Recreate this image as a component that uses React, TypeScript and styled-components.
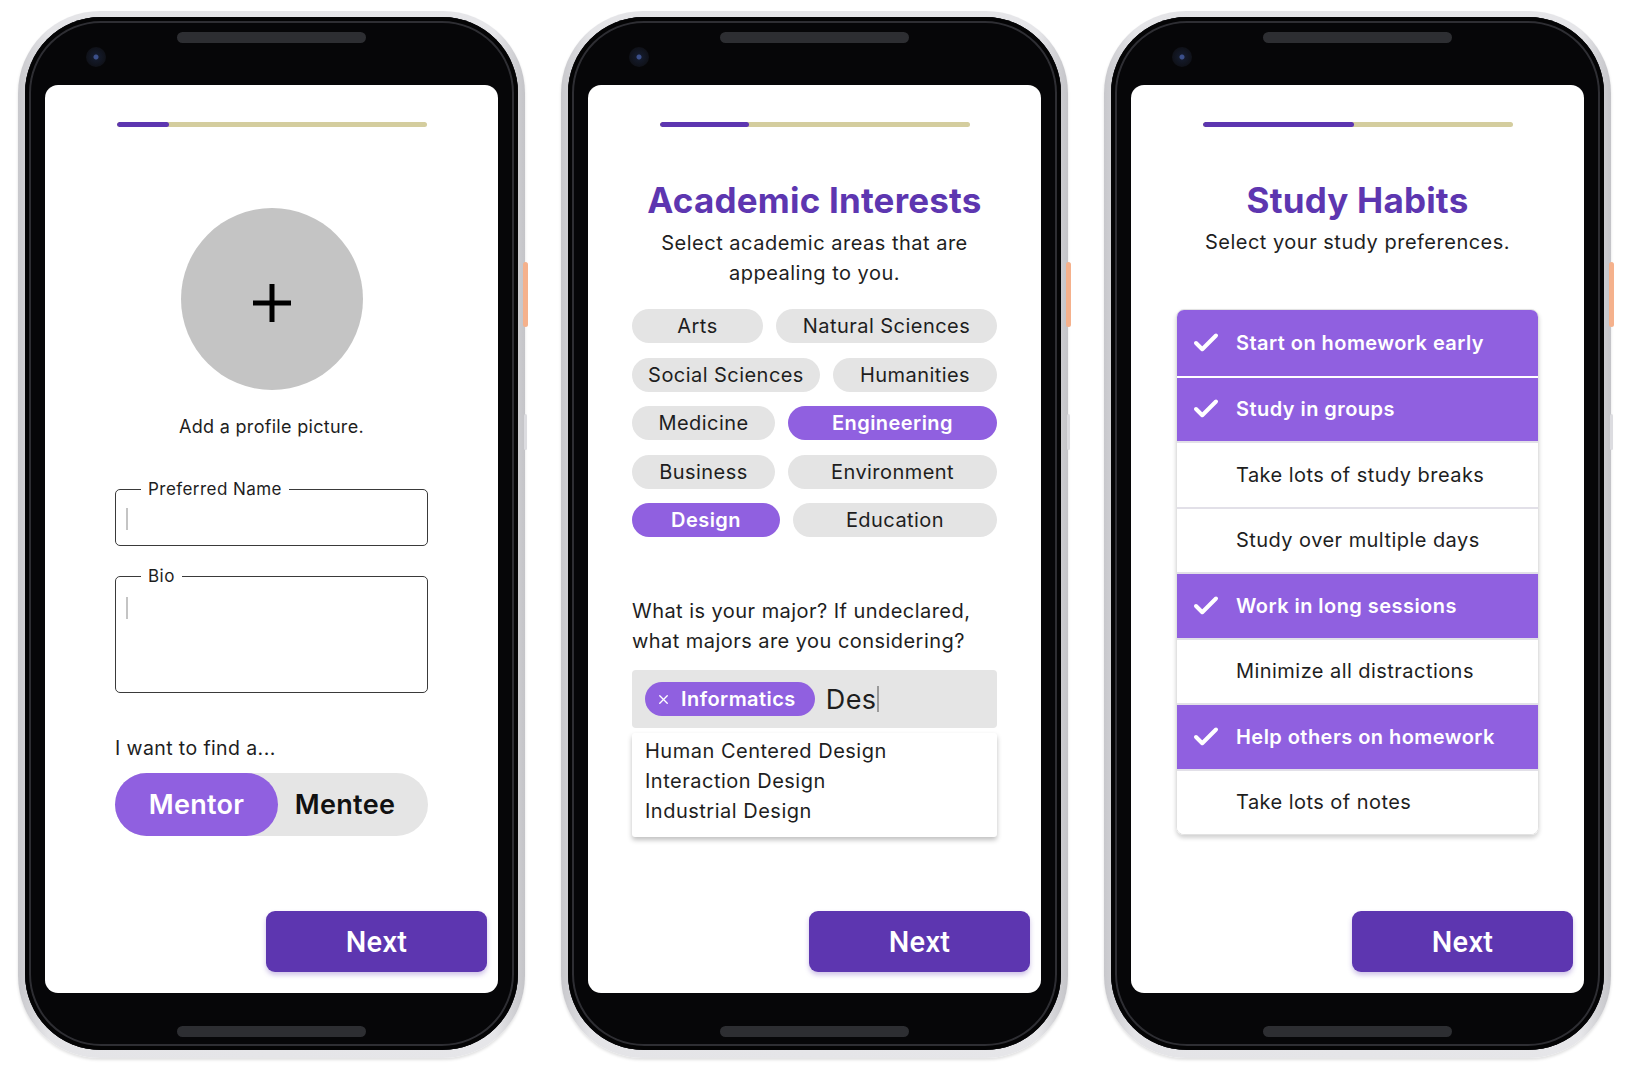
import React from 'react';
import styled, { createGlobalStyle } from 'styled-components';
import { Check, X } from 'lucide-react';

const DEEP = '#5d36b0';
const LIGHT = '#9060e0';
const TEXT = '#1e1e1e';
const SANS = "'Inter', 'Open Sans', sans-serif";

const GlobalStyle = createGlobalStyle`
  html, body {
    margin: 0;
    padding: 0;
    background: #ffffff;
  }
  body {
    font-family: ${SANS};
    color: ${TEXT};
  }
  * {
    box-sizing: border-box;
  }
`;

const interests = [
  { cols: '131px 1fr', items: [['Arts', false], ['Natural Sciences', false]] },
  { cols: '188px 1fr', items: [['Social Sciences', false], ['Humanities', false]] },
  { cols: '143px 1fr', items: [['Medicine', false], ['Engineering', true]] },
  { cols: '143px 1fr', items: [['Business', false], ['Environment', false]] },
  { cols: '148px 1fr', items: [['Design', true], ['Education', false]] },
] as const;

const habits: Array<[string, boolean]> = [
  ['Start on homework early', true],
  ['Study in groups', true],
  ['Take lots of study breaks', false],
  ['Study over multiple days', false],
  ['Work in long sessions', true],
  ['Minimize all distractions', false],
  ['Help others on homework', true],
  ['Take lots of notes', false],
];

const suggestions = ['Human Centered Design', 'Interaction Design', 'Industrial Design'];

interface PhoneProps {
  progress: number;
  children: React.ReactNode;
}

const Phone: React.FC<PhoneProps> = ({ progress, children }) => (
  <Shell>
    <SideKey />
    <VolumeKey />
    <Body>
      <TopBezel>
        <Camera />
        <Speaker />
      </TopBezel>
      <Screen>
        <Progress>
          <ProgressFill style={{ width: `${progress}%` }} />
        </Progress>
        {children}
        <NextButton>Next</NextButton>
      </Screen>
      <BottomBezel>
        <Speaker />
      </BottomBezel>
    </Body>
  </Shell>
);

const ProfileStep = () => (
  <Content $pad={70}>
    <Avatar>
      <svg width="38" height="38" viewBox="0 0 38 38">
        <path d="M19 0v38M0 19h38" stroke="#000" strokeWidth="5" />
      </svg>
    </Avatar>
    <Caption>Add a profile picture.</Caption>
    <Field $gap={40}>
      <legend>Preferred Name</legend>
      <FieldInner $height={46} $top={9}>
        <Caret />
      </FieldInner>
    </Field>
    <Field $gap={20}>
      <legend>Bio</legend>
      <FieldInner $height={106} $top={11}>
        <Caret />
      </FieldInner>
    </Field>
    <Prompt>I want to find a...</Prompt>
    <Toggle>
      <ToggleOption $active>Mentor</ToggleOption>
      <ToggleOption>Mentee</ToggleOption>
    </Toggle>
  </Content>
);

const InterestsStep = () => (
  <Content $pad={44}>
    <Title>Academic Interests</Title>
    <Subtitle>
      Select academic areas that are
      <br />
      appealing to you.
    </Subtitle>
    <ChipGrid>
      {interests.map(row => (
        <ChipRow key={row.items[0][0]} $cols={row.cols}>
          {row.items.map(([label, on]) => (
            <Chip key={label} $active={on}>
              {label}
            </Chip>
          ))}
        </ChipRow>
      ))}
    </ChipGrid>
    <Question>
      What is your major? If undeclared,
      <br />
      what majors are you considering?
    </Question>
    <TagInput>
      <Token>
        <X size={15} strokeWidth={2.2} />
        Informatics
      </Token>
      <Typed>Des</Typed>
      <TypedCaret />
    </TagInput>
    <Dropdown>
      {suggestions.map(s => (
        <Option key={s}>{s}</Option>
      ))}
    </Dropdown>
  </Content>
);

const HabitsStep = () => (
  <Content $pad={45}>
    <Title>Study Habits</Title>
    <Subtitle $gap={7}>Select your study preferences.</Subtitle>
    <HabitList>
      {habits.map(([label, on], i) => (
        <HabitRow
          key={label}
          $active={on}
          $joined={i > 0 && on && habits[i - 1][1]}
          $first={i === 0}
        >
          <CheckSlot>{on && <Check size={30} strokeWidth={3.2} color="#fff" />}</CheckSlot>
          {label}
        </HabitRow>
      ))}
    </HabitList>
  </Content>
);

const App = () => (
  <>
    <GlobalStyle />
    <Stage>
      <Phone progress={17}>
        <ProfileStep />
      </Phone>
      <Phone progress={29}>
        <InterestsStep />
      </Phone>
      <Phone progress={49}>
        <HabitsStep />
      </Phone>
    </Stage>
  </>
);

const Stage = styled.div`
  display: flex;
  gap: 36px;
  width: 1630px;
  height: 1068px;
  padding: 11px 0 0 18px;
  overflow: hidden;
`;

const Shell = styled.div`
  position: relative;
  flex: none;
  width: 507px;
  height: 1047px;
  padding: 6px 7px 8px;
  border-radius: 82px;
  background: linear-gradient(90deg, #c8c8cc 0%, #e4e4e7 6%, #e6e6e9 94%, #c4c4c8 100%);
  box-shadow: 0 2px 3px rgba(0, 0, 0, 0.12);
`;

const SideKey = styled.div`
  position: absolute;
  right: -3px;
  top: 251px;
  width: 5px;
  height: 65px;
  border-radius: 3px;
  background: #f5b18c;
`;

const VolumeKey = styled.div`
  position: absolute;
  right: -2px;
  top: 403px;
  width: 3px;
  height: 36px;
  border-radius: 2px;
  background: #dcdce0;
`;

const Body = styled.div`
  display: flex;
  flex-direction: column;
  height: 100%;
  padding: 0 20px;
  border-radius: 76px;
  background: #060608;
  box-shadow: inset 0 0 0 4px #040405, inset 0 0 0 6px #2e2e33;
`;

const TopBezel = styled.div`
  position: relative;
  flex: none;
  height: 68px;
  display: flex;
  justify-content: center;
`;

const Speaker = styled.div`
  width: 189px;
  height: 11px;
  margin-top: 15px;
  border-radius: 6px;
  background: #2d2e32;
`;

const Camera = styled.div`
  position: absolute;
  left: 41px;
  top: 30px;
  width: 20px;
  height: 20px;
  border-radius: 50%;
  background: radial-gradient(circle, #3b4f8a 0 2px, #141a2a 3px, #0f1118 10px);
`;

const BottomBezel = styled.div`
  flex: none;
  height: 57px;
  display: flex;
  justify-content: center;
  padding-top: 18px;
`;

const Screen = styled.div`
  flex: 1;
  display: flex;
  flex-direction: column;
  border-radius: 13px;
  background: #ffffff;
  overflow: hidden;
`;

const Progress = styled.div`
  flex: none;
  width: 310px;
  height: 5px;
  margin: 37px auto 0;
  border-radius: 3px;
  background: #d4cd9e;
  overflow: hidden;
`;

const ProgressFill = styled.div`
  height: 100%;
  border-radius: 3px;
  background: ${DEEP};
`;

const Content = styled.div<{ $pad: number }>`
  display: flex;
  flex-direction: column;
  padding: 0 ${p => p.$pad}px;
`;

const Avatar = styled.div`
  align-self: center;
  width: 182px;
  height: 182px;
  margin-top: 81px;
  padding-top: 8px;
  border-radius: 50%;
  background: #c4c4c4;
  display: flex;
  align-items: center;
  justify-content: center;
`;

const Caption = styled.div`
  margin-top: 25px;
  text-align: center;
  font-size: 18px;
  letter-spacing: 0.3px;
  line-height: 24px;
`;

const Field = styled.fieldset<{ $gap: number }>`
  margin: ${p => p.$gap}px 0 0;
  padding: 0 10px;
  border: 1.5px solid #3a3a3a;
  border-radius: 5px;

  legend {
    margin-left: 15px;
    padding: 0 7px;
    font-size: 17px;
    letter-spacing: 0.45px;
    line-height: 20px;
  }
`;

const FieldInner = styled.div<{ $height: number; $top: number }>`
  height: ${p => p.$height}px;
  padding-top: ${p => p.$top}px;
`;

const Caret = styled.div`
  width: 2px;
  height: 22px;
  background: #c4c4c4;
`;

const Prompt = styled.div`
  margin-top: 43px;
  font-size: 19.5px;
  letter-spacing: 0.4px;
  line-height: 24px;
`;

const Toggle = styled.div`
  display: flex;
  height: 63px;
  margin-top: 13px;
  border-radius: 32px;
  background: #e5e5e5;
`;

const ToggleOption = styled.div<{ $active?: boolean }>`
  flex: ${p => (p.$active ? '0 0 163px' : '1')};
  display: flex;
  align-items: center;
  justify-content: center;
  border-radius: 32px;
  background: ${p => (p.$active ? LIGHT : 'transparent')};
  color: ${p => (p.$active ? '#ffffff' : '#111111')};
  font-size: 27px;
  letter-spacing: 0.3px;
  font-weight: 600;
  padding-right: ${p => (p.$active ? 0 : 16)}px;
`;

const NextButton = styled.button`
  align-self: flex-end;
  width: 221px;
  height: 61px;
  margin: auto 11px 21px 0;
  border: none;
  border-radius: 9px;
  background: ${DEEP};
  box-shadow: 0 3px 5px rgba(93, 54, 176, 0.3);
  color: #ffffff;
  font-family: 'Roboto', sans-serif;
  font-size: 29px;
  letter-spacing: 0.3px;
  font-weight: 500;
`;

const Title = styled.h1`
  margin: 53px 0 0;
  text-align: center;
  color: ${DEEP};
  font-size: 35px;
  letter-spacing: 0.2px;
  line-height: 40px;
  font-weight: 700;
`;

const Subtitle = styled.p<{ $gap?: number }>`
  margin: ${p => p.$gap ?? 8}px 0 0;
  text-align: center;
  font-size: 20px;
  letter-spacing: 0.5px;
  line-height: 30px;
`;

const ChipGrid = styled.div`
  display: flex;
  flex-direction: column;
  gap: 14.5px;
  margin-top: 21px;
`;

const ChipRow = styled.div<{ $cols: string }>`
  display: grid;
  grid-template-columns: ${p => p.$cols};
  gap: 13px;
`;

const Chip = styled.div<{ $active: boolean }>`
  height: 34px;
  display: flex;
  align-items: center;
  justify-content: center;
  border-radius: 17px;
  background: ${p => (p.$active ? LIGHT : '#e4e4e4')};
  color: ${p => (p.$active ? '#ffffff' : TEXT)};
  font-size: 20px;
  letter-spacing: 0.45px;
  font-weight: ${p => (p.$active ? 600 : 400)};
`;

const Question = styled.p`
  margin: 59px 0 0;
  font-size: 20px;
  letter-spacing: 0.45px;
  line-height: 30px;
`;

const TagInput = styled.div`
  display: flex;
  align-items: center;
  height: 58px;
  margin-top: 14px;
  padding: 0 13px;
  border-radius: 4px;
  background: #e5e5e5;
`;

const Token = styled.div`
  display: flex;
  align-items: center;
  gap: 10px;
  height: 34px;
  padding: 0 19px 0 11px;
  border-radius: 17px;
  background: ${LIGHT};
  color: #ffffff;
  font-size: 20px;
  letter-spacing: 0.45px;
  font-weight: 600;
`;

const Typed = styled.span`
  margin-left: 11px;
  font-size: 27px;
  letter-spacing: 0.4px;
`;

const TypedCaret = styled.span`
  width: 2px;
  height: 26px;
  margin-left: 1px;
  background: #9a9a9a;
`;

const Dropdown = styled.div`
  height: 104px;
  margin-top: 5px;
  padding: 3px 13px 0;
  border-radius: 3px;
  background: #ffffff;
  box-shadow: 0 3px 5px rgba(0, 0, 0, 0.25);
`;

const Option = styled.div`
  font-size: 20px;
  letter-spacing: 0.5px;
  line-height: 30px;
`;

const HabitList = styled.div`
  margin-top: 52px;
  border: 1px solid #e2e2e2;
  border-radius: 8px;
  box-shadow: 0 3px 4px rgba(0, 0, 0, 0.18);
  overflow: hidden;
`;

const HabitRow = styled.div<{ $active: boolean; $joined: boolean; $first: boolean }>`
  display: flex;
  align-items: center;
  height: 65.5px;
  padding-left: 14px;
  border-top: ${p => (p.$first ? 'none' : `2px solid ${p.$joined ? '#ffffff' : '#e2e0e8'}`)};
  background: ${p => (p.$active ? LIGHT : '#ffffff')};
  color: ${p => (p.$active ? '#ffffff' : TEXT)};
  font-size: 20px;
  letter-spacing: 0.45px;
  font-weight: ${p => (p.$active ? 600 : 400)};
`;

const CheckSlot = styled.div`
  width: 30px;
  height: 30px;
  margin-right: 15px;
  display: flex;
  align-items: center;
`;

export default App;
